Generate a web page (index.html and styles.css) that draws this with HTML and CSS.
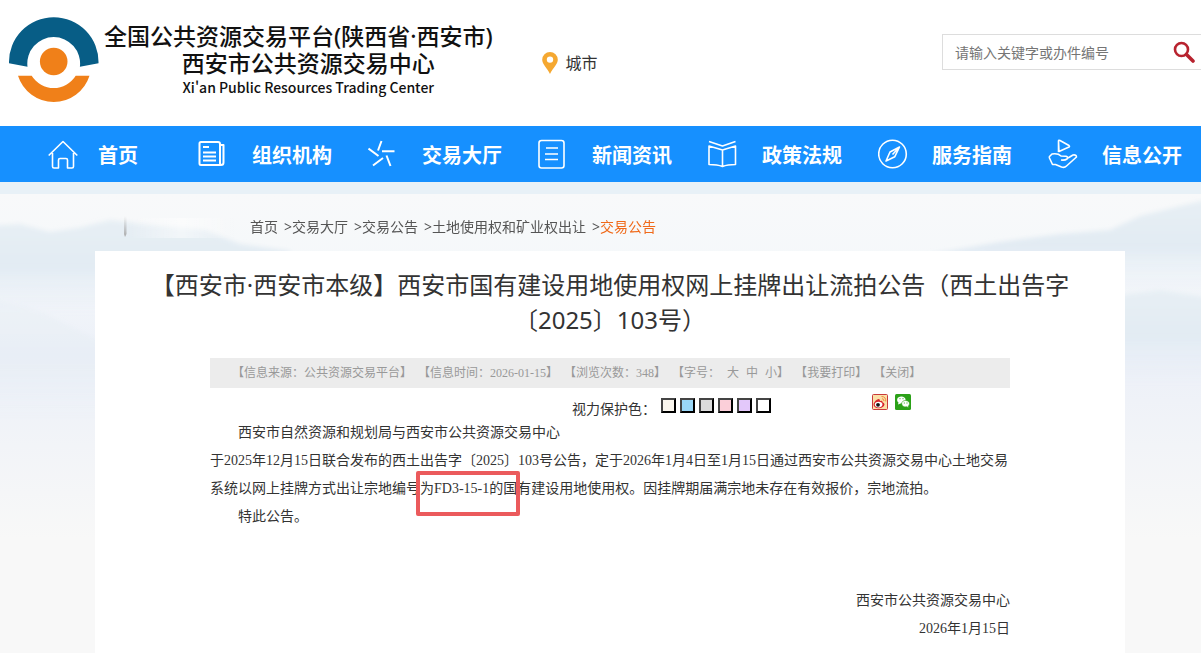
FILE: index.html
```html
<!DOCTYPE html>
<html lang="zh-CN">
<head>
<meta charset="utf-8">
<title>西安市公共资源交易中心</title>
<link rel="stylesheet" href="styles.css">
</head>
<body>
<header class="header">
  <a class="brand" href="#">
    <svg class="brand-mark" viewBox="0 0 92 88" aria-hidden="true">
      <path fill="#075d86" d="M1 47.300A44.770 44.770 0 1 1 90.500 47.300L71.900 50.700A26.400 26.400 0 1 0 19.500 50.700Z"/>
      <path fill="#f08019" d="M10 59.700H23.700A25.800 25.800 0 0 0 67.700 59.700H81.500A37.500 37.500 0 0 1 10 59.700Z"/>
      <circle cx="45.700" cy="45.500" r="13.800" fill="#f08019"/>
    </svg>
    <span class="brand-text">
      <span class="brand-platform">全国公共资源交易平台(陕西省·西安市)</span>
      <span class="brand-center">西安市公共资源交易中心</span>
      <span class="brand-en">Xi'an Public Resources Trading Center</span>
    </span>
  </a>
  <a class="city" href="#">
    <svg class="city-pin" viewBox="0 0 16 22" aria-hidden="true"><path fill="#f5a831" fill-rule="evenodd" d="M8 0a7.800 7.800 0 0 1 7.800 7.800C15.800 12 11 16 8 22 5 16 .2 12 .2 7.800A7.800 7.800 0 0 1 8 0Zm0 4.400a3.200 3.200 0 1 0 0 6.400 3.200 3.200 0 0 0 0-6.400Z"/></svg>
    城市
  </a>
  <form class="search">
    <input class="search-input" type="text" aria-label="搜索" placeholder="请输入关键字或办件编号">
    <button class="search-button" type="button" aria-label="搜索">
      <svg class="search-icon" viewBox="0 0 22 22" aria-hidden="true"><circle cx="8.500" cy="8.500" r="6.500" fill="none" stroke="#b8232f" stroke-width="2.600"/><path d="M13.500 13.500 20 20" stroke="#b8232f" stroke-width="3.600" stroke-linecap="round"/></svg>
    </button>
  </form>
</header>

<nav class="nav">
  <a class="nav-item nav-home" href="#">
    <svg class="nav-icon" viewBox="0 0 30 30" aria-hidden="true"><path d="M.7 16.500 15 2.500 29.300 16.500M4.500 14v13.500q0 1.500 1.500 1.500h4.500V21q0-1.500 1.500-1.500h6q1.500 0 1.500 1.500v8H24q1.500 0 1.500-1.500V14"/></svg>
    首页
  </a>
  <a class="nav-item" href="#">
    <svg class="nav-icon" viewBox="0 0 30 30" aria-hidden="true"><path stroke-width="2" d="M22 24V5q0-2-2-2H3Q1.500 3 1.500 4.500v20Q1.500 26 3 26H23q2.500 0 2.500-2.500V6H22M5 8h6M5 13.500h13M5 17.500h13M5 21.500h13M22 24q0 2 1.500 2"/></svg>
    组织机构
  </a>
  <a class="nav-item" href="#">
    <svg class="nav-icon" viewBox="0 0 30 30" aria-hidden="true"><path stroke-width="2" d="M13.500 2 10 11.500M.5 9.500 10.500 17M14 12.300h12.500M15 19 5 26.500M18.500 16.500l4 10.500"/></svg>
    交易大厅
  </a>
  <a class="nav-item" href="#">
    <svg class="nav-icon" viewBox="0 0 30 30" aria-hidden="true"><rect x="1" y="1.500" width="25" height="27.500" rx="2.500"/><path d="M8 9h12M7 15h13M7 20.500h13"/></svg>
    新闻资讯
  </a>
  <a class="nav-item" href="#">
    <svg class="nav-icon" viewBox="0 0 30 30" aria-hidden="true"><path d="M1 2.500 14.500 7 27.500 2.500M1 7l13.500 4L27.500 7v18.500q-8 0-13 2-5-2-13.500-2ZM14.500 11v16.500"/></svg>
    政策法规
  </a>
  <a class="nav-item" href="#">
    <svg class="nav-icon" viewBox="0 0 30 30" aria-hidden="true"><circle cx="14.500" cy="15" r="13.800"/><path d="M21.500 8 12 13 8 22 16.800 17.700ZM21.500 8 14.500 15.500"/></svg>
    服务指南
  </a>
  <a class="nav-item" href="#">
    <svg class="nav-icon" viewBox="0 0 30 30" aria-hidden="true"><path d="M10.500 2q0-1 1.500-.5L21 6.500q1 .8 0 1.500L11 12.500ZM10.500 2v11M1 18 4 15q6-1 9 2l5 .3q2.500.7 1 2.700-2 1.500-6 1M20 19l5-3q3.500-.5 3.500 2L18.500 27q-2 2-5 1l-6-2.500H4.500L1 18"/></svg>
    信息公开
  </a>
</nav>

<main class="page">
  <svg class="scenery" viewBox="0 0 1201 459" preserveAspectRatio="none" aria-hidden="true">
    <defs>
      <linearGradient id="sky" x2="0" y2="1"><stop stop-color="#f8f9fa"/><stop offset=".15" stop-color="#f5f8fa"/><stop offset=".35" stop-color="#ecf0f8"/><stop offset=".75" stop-color="#f8f8f8"/></linearGradient>
      <linearGradient id="ridge" x2="0" y2="1"><stop stop-color="#e7eff4"/><stop offset=".5" stop-color="#e2ebf3"/><stop offset="1" stop-color="#e8eff7" stop-opacity="0"/></linearGradient>
      <linearGradient id="tick" x2="0" y2="1"><stop stop-color="#b8b8b8" stop-opacity="0"/><stop offset="1" stop-color="#a8a8a8"/></linearGradient>
      <linearGradient id="shine"><stop stop-color="#fff" stop-opacity="0"/><stop offset=".5" stop-color="#fff" stop-opacity=".5"/><stop offset="1" stop-color="#fff" stop-opacity="0"/></linearGradient>
      <filter id="mist" x="-10%" y="-20%" width="120%" height="140%"><feGaussianBlur stdDeviation="2"/></filter>
    </defs>
    <path fill="url(#sky)" d="M0 0H1201V459H0Z"/>
    <g filter="url(#mist)">
      <path fill="url(#ridge)" d="M-9 32 20 30 50 38 78 34 110 26 150 31 205 36 240 50 290 57V120H-9Z"/>
      <path fill="url(#ridge)" d="M930 60 1000 48 1060 40 1110 36 1140 22 1180 12 1210 5V100H930Z"/>
      <path fill="url(#ridge)" d="M1100 104 1160 96 1210 104V190H1100Z"/>
      <path fill="url(#ridge)" d="M-9 104 40 118 105 150V230H-9Z" opacity=".4"/>
    </g>
    <path fill="url(#shine)" d="M128 24H235V44H128Z"/>
    <path fill="url(#tick)" d="M124 22h2.500v18l-1.500 3-1-3Z"/>
  </svg>
  <div class="crumbs">
    <a href="#">首页</a><span class="sep">&gt;</span><a href="#">交易大厅</a><span class="sep">&gt;</span><a href="#">交易公告</a><span class="sep">&gt;</span><a href="#">土地使用权和矿业权出让</a><span class="sep">&gt;</span><a class="current" href="#">交易公告</a>
  </div>
  <article class="panel">
    <h1 class="title">【西安市·西安市本级】西安市国有建设用地使用权网上挂牌出让流拍公告（西土出告字〔2025〕103号）</h1>
    <div class="content">
      <div class="meta">
        <span>【信息来源：公共资源交易平台】</span>
        <span>【信息时间：2026-01-15】</span>
        <span>【浏览次数：348】</span>
        <span class="sizes"><span>【字号：</span><a href="#">大</a><a href="#">中</a><span><a href="#">小</a>】</span></span>
        <span>【<a href="#">我要打印</a>】</span>
        <span>【<a href="#">关闭</a>】</span>
      </div>
      <div class="tools">
        <span class="tools-label">视力保护色：</span>
        <div class="swatches">
          <button class="swatch cream" type="button" aria-label="米色"></button>
          <button class="swatch blue" type="button" aria-label="蓝色"></button>
          <button class="swatch gray" type="button" aria-label="灰色"></button>
          <button class="swatch pink" type="button" aria-label="粉色"></button>
          <button class="swatch purple" type="button" aria-label="紫色"></button>
          <button class="swatch white" type="button" aria-label="白色"></button>
        </div>
        <div class="share">
          <a href="#" aria-label="微博"><svg class="share-icon" viewBox="0 0 16 16" aria-hidden="true"><rect x=".5" y=".5" width="15" height="15" rx="1" fill="#fbe0a8" stroke="#c93a3a"/><path fill="#d9252b" d="M6.500 5Q3 6 1.500 10q0 4 5 4.300 5.500-.3 6-4-.3-1.500-2-2 .2-2-2.500-1.300Q8.200 5 6.500 5Z"/><ellipse cx="6.600" cy="10.600" rx="3.800" ry="2.800" fill="#fff"/><circle cx="6" cy="10.800" r="1.900" fill="#161616"/><path d="M9.500 2.500q4.500 0 4.300 5M10 4.700q2 .2 2 2.300" fill="none" stroke="#ef8a3c"/></svg></a>
          <a href="#" aria-label="微信"><svg class="share-icon" viewBox="0 0 16 16" aria-hidden="true"><rect width="16" height="16" rx="1.500" fill="#2ba118"/><path fill="#fff" d="M6.300 2.500c2.500 0 4.300 1.500 4.300 3.400S8.800 9.200 6.300 9.200L3 10.500 3.500 8.500C1 6.500 2 2.500 6.300 2.500Z"/><path fill="#fff" stroke="#2ba118" stroke-width=".6" d="M10.500 6.500c2.300 0 4 1.300 4 3.200 0 1.200-.6 1.800-1.300 2.400l.3 1.700-1.800-1c-3 .5-5-1-5-3.100s1.700-3.200 3.800-3.200Z"/><path d="M4.500 4.700h1M7.500 4.700h1M8.800 9h1M11.500 9h1" stroke="#2ba118"/></svg></a>
        </div>
      </div>
      <div class="body">
        <p class="indent">西安市自然资源和规划局与西安市公共资源交易中心</p>
        <p>于2025年12月15日联合发布的西土出告字〔2025〕103号公告，定于2026年1月4日至1月15日通过西安市公共资源交易中心土地交易系统以网上挂牌方式出让宗地编号<span class="marked">为FD3-15-1的国</span>有建设用地使用权。因挂牌期届满宗地未存在有效报价，宗地流拍。</p>
        <p class="indent">特此公告。</p>
        <div class="signature">
          <p>西安市公共资源交易中心</p>
          <p>2026年1月15日</p>
        </div>
      </div>
    </div>
  </article>
</main>
</body>
</html>
```

FILE: styles.css
```css
* {
  box-sizing: border-box;
}

body {
  margin: 0;
  min-height: 100vh;
  display: flex;
  flex-direction: column;
  background: #fff;
  color: #333;
  font-family: "Noto Sans", "Noto Sans CJK SC", sans-serif;
  font-size: 14px;
  text-spacing-trim: space-all;
}

a {
  color: inherit;
  text-decoration: none;
}

p,
h1 {
  margin: 0;
}

svg {
  display: block;
}

/* Header */
.header {
  height: 126px;
  display: flex;
  align-items: flex-start;
  padding-left: 8px;
}

.brand {
  display: flex;
  gap: 4px;
  padding-top: 16px;
  color: #111;
  font-weight: 500;
}

.brand-mark {
  width: 92px;
  height: 88px;
}

.brand-text {
  display: flex;
  flex-direction: column;
  align-items: center;
  padding-top: 7px;
  white-space: nowrap;
}

.brand-platform {
  font-size: 23px;
  line-height: 27px;
}

.brand-center {
  padding-left: 20px;
  font-size: 23px;
  line-height: 27px;
}

.brand-en {
  padding-left: 20px;
  font-family: "Noto Sans CJK SC", sans-serif;
  font-size: 14px;
  line-height: 20px;
}

.city {
  display: flex;
  align-items: center;
  gap: 8px;
  margin-left: 49px;
  padding-top: 51px;
  font-size: 16px;
  line-height: 24px;
}

.city-pin {
  width: 16px;
  height: 22px;
}

.search {
  display: flex;
  width: 259px;
  height: 36px;
  margin: 34px 0 0 auto;
  border: 1px solid #ddd;
  border-right: 0;
}

.search-input {
  flex: 1;
  min-width: 0;
  padding: 0 12px;
  border: 0;
  background: none;
  font: inherit;
  outline: 0;
}

.search-input::placeholder {
  color: #757575;
}

.search-button {
  padding: 0 6px;
  border: 0;
  background: none;
}

.search-icon {
  width: 22px;
  height: 22px;
}

/* Main navigation */
.nav {
  height: 56px;
  display: flex;
  align-items: center;
  gap: 36px;
  padding-left: 48px;
  background: #1690ff;
  color: #fff;
  font-size: 20px;
  font-weight: 700;
  white-space: nowrap;
}

.nav-item {
  display: flex;
  align-items: center;
  gap: 24px;
}

.nav-home {
  gap: 20px;
  padding-right: 24px;
}

.nav-icon {
  width: 30px;
  height: 30px;
  fill: none;
  stroke: #fff;
  stroke-width: 1.6;
  stroke-linejoin: round;
}

/* Page */
.page {
  position: relative;
  flex: 1;
  display: flex;
  flex-direction: column;
  border-top: 12px solid #e8f1f7;
  background: #f8f8f8;
}

.scenery {
  position: absolute;
  inset: 0;
  width: 100%;
  height: 100%;
}

.crumbs {
  position: relative;
  display: flex;
  height: 57px;
  padding: 21px 0 0 250px;
  color: #555;
  line-height: 24px;
}

.sep {
  padding-left: 6px;
}

.current {
  color: #f06a1a;
}

.panel {
  position: relative;
  flex: 1;
  margin: 0 76px 0 95px;
  padding: 16px 40px 0;
  background: #fff;
}

.title {
  font-size: 24px;
  font-weight: 400;
  line-height: 35px;
  text-align: center;
}

.content {
  margin: 21px 75px 0;
  font-family: "Liberation Serif", "Noto Sans CJK SC", serif;
}

.meta {
  display: flex;
  gap: 6px;
  padding-left: 22px;
  background: #ececec;
  color: #999;
  font-size: 12px;
  line-height: 30px;
  white-space: nowrap;
}

.sizes {
  display: flex;
  gap: 7px;
}

.tools {
  display: flex;
  height: 31px;
  padding: 6px 0 0 362px;
}

.tools-label {
  padding-top: 4px;
  line-height: 24px;
}

.swatches {
  display: flex;
  gap: 4px;
  padding: 4px 0 0 5px;
}

.swatch {
  width: 15px;
  height: 15px;
  padding: 0;
  border: 2px solid #000;
  border-top-color: #444;
  border-left-color: #444;
}

.cream {
  background: #faf6ee;
}

.blue {
  background: #9ad7f7;
}

.gray {
  background: #dcdcdc;
}

.pink {
  background: #fbcfd9;
}

.purple {
  background: #e3c8fa;
}

.white {
  background: #fff;
}

.share {
  display: flex;
  gap: 7px;
  margin: 0 99px 0 auto;
}

.share-icon {
  width: 16px;
  height: 16px;
}

.body {
  line-height: 28px;
}

.indent {
  text-indent: 28px;
}

.marked {
  position: relative;
}

.marked::after {
  content: "";
  position: absolute;
  inset: -10px -3px -20px -4px;
  border: 4px solid #eb5a5c;
  border-radius: 2px;
}

.signature {
  padding-top: 56px;
  text-align: right;
}
```
